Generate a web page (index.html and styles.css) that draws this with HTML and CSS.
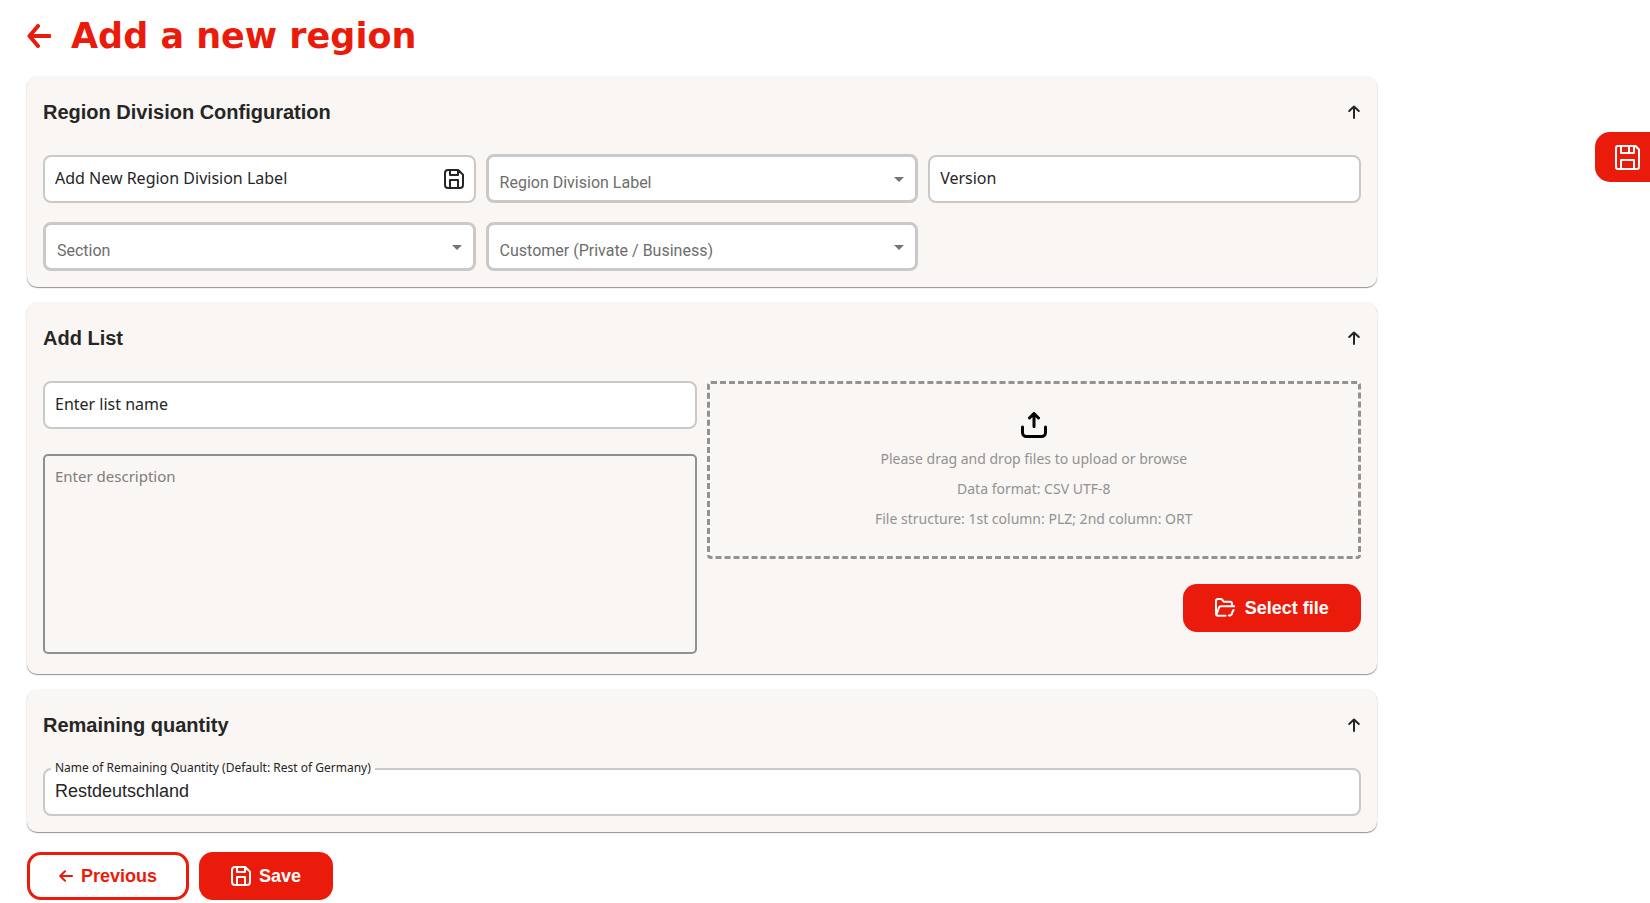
FILE: index.html
```html
<!DOCTYPE html>
<html lang="en">
<head>
<meta charset="utf-8">
<title>Add a new region</title>
<link rel="stylesheet" href="styles.css">
</head>
<body>
<svg class="sprite" aria-hidden="true">
  <symbol id="arrow-up" viewBox="0 0 14 14"><path d="M7 13V1.500M2.200 6L7 1.500L11.800 6"/></symbol>
  <symbol id="floppy" viewBox="0 0 20 20"><path d="M4 1H14.200L19 5.800V16A3 3 0 0 1 16 19H4A3 3 0 0 1 1 16V4A3 3 0 0 1 4 1ZM6 1V6H14V1M6 19V11H14V19"/></symbol>
</svg>
<main class="page">
  <header class="page-head">
    <a class="back" href="#" aria-label="Back"><svg viewBox="0 0 24 24"><path d="M22.500 12H3M11 2L2.500 12L11 22"/></svg></a>
    <h1 class="title">Add a new region</h1>
  </header>

  <section class="card">
    <header class="card-head">
      <h2 class="card-title">Region Division Configuration</h2>
      <button class="toggle" aria-label="Collapse configuration"><svg><use href="#arrow-up"/></svg></button>
    </header>
    <div class="card-body thirds">
      <div class="field">
        <input class="field-input" type="text" placeholder="Add New Region Division Label" aria-label="Add New Region Division Label">
        <button class="field-save" aria-label="Save label"><svg><use href="#floppy"/></svg></button>
      </div>
      <div class="select-box"><select class="select" aria-label="Region Division Label"><option>Region Division Label</option></select></div>
      <div class="field"><input class="field-input" type="text" placeholder="Version" aria-label="Version"></div>
      <div class="select-box"><select class="select" aria-label="Section"><option>Section</option></select></div>
      <div class="select-box"><select class="select" aria-label="Customer"><option>Customer (Private / Business)</option></select></div>
    </div>
  </section>

  <section class="card">
    <header class="card-head">
      <h2 class="card-title">Add List</h2>
      <button class="toggle" aria-label="Collapse list"><svg><use href="#arrow-up"/></svg></button>
    </header>
    <div class="card-body halves">
      <div class="column">
        <div class="field"><input class="field-input" type="text" placeholder="Enter list name" aria-label="Enter list name"></div>
        <textarea class="description" placeholder="Enter description" aria-label="Enter description"></textarea>
      </div>
      <div class="column">
        <div class="dropzone">
          <svg class="upload" viewBox="0 0 26 26"><path d="M13 14.500V2M8.500 6L13 1.500L17.500 6M1.500 15V20.500A4 4 0 0 0 5.500 24.500H20.500A4 4 0 0 0 24.500 20.500V15"/></svg>
          <p class="hint">Please drag and drop files to upload or browse</p>
          <p class="hint">Data format: CSV UTF-8</p>
          <p class="hint">File structure: 1st column: PLZ; 2nd column: ORT</p>
        </div>
        <button class="btn select-file">
          <svg class="folder" viewBox="0 0 20 20"><path d="M10.500 17.800H3A2 2 0 0 1 1 15.800V3A2 2 0 0 1 3 1H6.500L9 3.800H15A2 2 0 0 1 17 5.800V8M1.500 16.500L4 9.500A2 2 0 0 1 5.800 8.200H19.200M18.500 12L17.200 14.500M13.800 17.500H15.200L17 16"/></svg>
          Select file
        </button>
      </div>
    </div>
  </section>

  <section class="card">
    <header class="card-head">
      <h2 class="card-title">Remaining quantity</h2>
      <button class="toggle" aria-label="Collapse quantity"><svg><use href="#arrow-up"/></svg></button>
    </header>
    <div class="card-body">
      <div class="field labelled">
        <label class="float-label" for="rest">Name of Remaining Quantity (Default: Rest of Germany)</label>
        <input class="field-input value" id="rest" type="text" value="Restdeutschland">
      </div>
    </div>
  </section>

  <footer class="actions">
    <button class="btn outline"><svg class="prev" viewBox="0 0 14 12"><path d="M13 6H1.500M6 1.200L1.200 6L6 10.800"/></svg>Previous</button>
    <button class="btn save"><svg class="disk"><use href="#floppy"/></svg>Save</button>
  </footer>
</main>
<button class="side-save" aria-label="Save"><svg viewBox="0 0 25 25"><path d="M3 1H20.500L24 4.500V22A2 2 0 0 1 22 24H3A2 2 0 0 1 1 22V3A2 2 0 0 1 3 1ZM6 1V8H19V1M14 1V7M6 24V15H19V24"/></svg></button>
</body>
</html>
```

FILE: styles.css
```css
* { box-sizing: border-box; }
body { margin: 0; background: #fff; color: #262626; font-family: "Noto Sans", sans-serif; font-size: 16px; }
svg { display: block; fill: none; stroke: currentColor; stroke-width: 2; stroke-linecap: round; stroke-linejoin: round; }
button { font: inherit; color: inherit; border: 0; padding: 0; background: none; cursor: pointer; }
.sprite { display: none; }
.page { width: 81.8%; margin-left: 27px; display: flex; flex-direction: column; gap: 16px; }
.page-head { height: 61px; display: flex; align-items: center; gap: 20px; padding-top: 10px; }
.back { color: #eb1b0b; }
.back svg { width: 24px; height: 24px; stroke-width: 4; }
.title { margin: 0; color: #eb1b0b; font: bold 35px/44px "Arial Black", "DejaVu Sans", sans-serif; }
.card { background: #faf6f3; border-radius: 10px; box-shadow: 0 1px 1px rgba(0, 0, 0, .4), 0 0 3px rgba(0, 0, 0, .08); }
.card-head { height: 70px; padding: 0 16px; display: flex; align-items: center; justify-content: space-between; }
.card-title { margin: 0; font: bold 20px/24px "Liberation Sans", sans-serif; }
.toggle svg { width: 14px; height: 14px; }
.card-body { padding: 8px 16px 16px; }
.thirds { display: grid; grid-template-columns: repeat(3, 1fr); gap: 19px 10px; align-items: end; padding-top: 7px; }
.halves { display: grid; grid-template-columns: repeat(2, 1fr); gap: 10px; padding-bottom: 20px; }
.column { display: flex; flex-direction: column; gap: 25px; }
.field { height: 48px; display: flex; align-items: center; border: 2px solid #cbc9c7; border-radius: 8px; background: #fff; padding: 0 10px; }
.field-input { flex: 1; min-width: 0; border: 0; padding: 0 0 2px; outline: 0; background: none; font: 16px/24px "Noto Sans", sans-serif; color: #262626; }
.field-input::placeholder { color: #262626; opacity: 1; }
.field-save svg { width: 20px; height: 20px; }
.select-box { position: relative; }
.select-box::after { content: ""; position: absolute; right: 14px; top: 23px; border: 5px solid transparent; border-top-color: #757575; border-bottom: 0; pointer-events: none; }
.select { display: block; width: 100%; height: 49px; appearance: none; border: 3px solid #cbc9c7; border-radius: 8px; background: #fff; padding: 8px 32px 0 11px; font: 16px/24px Roboto, sans-serif; color: #6d6d6d; }
.description { display: block; width: 100%; height: 200px; resize: none; border: 2px solid #8f908f; border-radius: 5px; background: none; padding: 8px 10px; font: 15px/24px "Noto Sans", sans-serif; }
.description::placeholder { color: #7d7d7d; opacity: 1; }
.dropzone { height: 178px; border: 3px dashed #929292; border-radius: 4px; display: flex; flex-direction: column; align-items: center; padding-top: 28px; }
.upload { width: 26px; height: 26px; color: #000; stroke-width: 3; margin-bottom: 6px; }
.hint { margin: 0; font-size: 14px; line-height: 30px; color: #929292; }
.btn { height: 48px; display: flex; align-items: center; justify-content: center; gap: 8px; border-radius: 14px; background: #eb1b0b; color: #fff; font: bold 18px/24px "Liberation Sans", sans-serif; padding: 0 32px; }
.select-file { align-self: flex-end; gap: 10px; }
.folder, .disk { width: 20px; height: 20px; }
.labelled { position: relative; }
.float-label { position: absolute; left: 6px; top: -11px; padding: 0 4px; font-size: 12px; line-height: 18px; background: linear-gradient(#faf6f3 9px, #fff 9px); }
.value { font-family: "Liberation Sans", sans-serif; font-size: 18px; }
.actions { display: flex; gap: 10px; padding-top: 4px; }
.outline { border: 3px solid #eb1b0b; background: #fff; color: #eb1b0b; padding: 0 29px; }
.prev { width: 14px; height: 12px; }
.side-save { position: fixed; right: 0; top: 132px; width: 55px; height: 50px; padding-left: 20px; border-radius: 15px 0 0 15px; background: #eb1b0b; color: #fff; }
.side-save svg { width: 25px; height: 25px; }
```
